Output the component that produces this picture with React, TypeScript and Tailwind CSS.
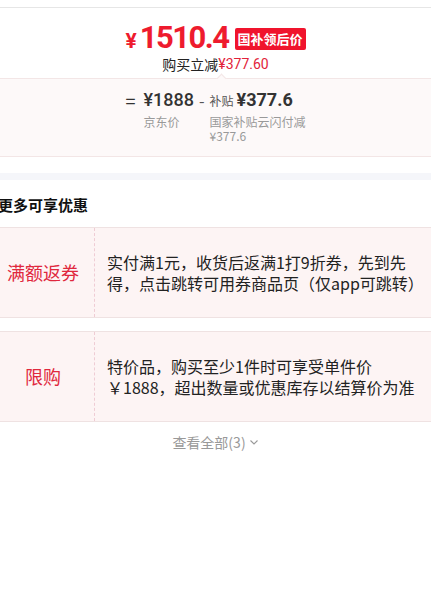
import React from "react";

const CJK = "'Noto Sans CJK SC', sans-serif";
const NUM = "Roboto, 'Noto Sans CJK SC', sans-serif";

function PromoRow({ label, lines }: { label: string; lines: string }) {
  return (
    <div className="-ml-[8px] flex h-[91px] w-[460px] border-y border-[#efe2e2] bg-[#fdf4f4]">
      <div className="flex w-[103px] shrink-0 items-center justify-center border-r border-dashed border-[#efccd4] text-[18px] text-[#e0283d]">
        {label}
      </div>
      <div className="flex items-center pl-[12px]">
        <p className="w-[312px] text-[16px] leading-[21px] text-[#222]">{lines}</p>
      </div>
    </div>
  );
}

export default function App() {
  return (
    <div className="h-[594px] w-[431px] overflow-hidden bg-white" style={{ fontFamily: CJK }}>
      <div className="mt-[7px] border-t border-[#e6e6e6]" />
      <div className="flex flex-col items-center pt-[15px]">
        <div className="flex h-[30px] items-center">
          <span className="mt-[6px] text-[21px] font-bold leading-none text-[#ee1b2e]" style={{ fontFamily: NUM }}>
            ¥
          </span>
          <span
            className="ml-[3px] text-[31px] font-bold leading-[30px] tracking-[-1.5px] text-[#ee1b2e]"
            style={{ fontFamily: NUM }}
          >
            1510.4
          </span>
          <span className="ml-[6px] mt-[2px] rounded-[2px] bg-[#f0142d] px-[3px] text-[13px] font-bold leading-[22px] text-white">
            国补领后价
          </span>
        </div>
        <div className="mt-[2px] flex items-center text-[14px] leading-[18px] text-[#222]">
          <span>购买立减</span>
          <span className="text-[#e2233a]" style={{ fontFamily: NUM }}>
            ¥377.60
          </span>
        </div>
      </div>

      <div className="relative mt-[5px] h-[79px] border-y border-[#f3e6e6] bg-[#fdf9f9]">
        <div className="absolute -top-[4px] left-[218px] h-[7px] w-[7px] rotate-45 border-l border-t border-[#f3e6e6] bg-[#fdf9f9]" />
        <div className="flex justify-center pt-[9px] pl-[2px]">
          <span className="mr-[8px] text-[18px] leading-[24px] text-[#333]">=</span>
          <div className="flex flex-col">
            <span className="text-[18px] font-medium leading-[24px] text-[#333]" style={{ fontFamily: NUM }}>
              ¥1888
            </span>
            <span className="mt-[3px] text-[12px] leading-[14px] text-[#999]">京东价</span>
          </div>
          <span className="mx-[5px] text-[16px] leading-[24px] text-[#555]">-</span>
          <div className="flex flex-col">
            <div className="flex items-baseline">
              <span className="text-[12px] text-[#555]">补贴</span>
              <span className="ml-[3px] text-[18px] font-bold leading-[24px] text-[#333]" style={{ fontFamily: NUM }}>
                ¥377.6
              </span>
            </div>
            <span className="mt-[3px] w-[98px] text-[12px] leading-[14px] text-[#999]">国家补贴云闪付减¥377.6</span>
          </div>
        </div>
      </div>

      <div className="mt-[16px] h-[7px] bg-[#f5f6fa]" />

      <div className="-ml-[2px] mt-[15px] text-[15px] font-bold leading-[20px] text-[#111]">更多可享优惠</div>

      <div className="mt-[12px]">
        <PromoRow label="满额返券" lines="实付满1元，收货后返满1打9折券，先到先得，点击跳转可用券商品页（仅app可跳转）" />
      </div>
      <div className="mt-[13px]">
        <PromoRow label="限购" lines="特价品，购买至少1件时可享受单件价￥1888，超出数量或优惠库存以结算价为准" />
      </div>

      <div className="mt-[11px] flex items-center justify-center text-[14px] leading-[18px] text-[#999]">
        <span>查看全部(3)</span>
        <svg className="ml-[3px]" width="10" height="10" viewBox="0 0 10 10" fill="none">
          <path d="M1.5 3.5 L5 7 L8.5 3.5" stroke="#999" strokeWidth="1.1" />
        </svg>
      </div>
    </div>
  );
}
